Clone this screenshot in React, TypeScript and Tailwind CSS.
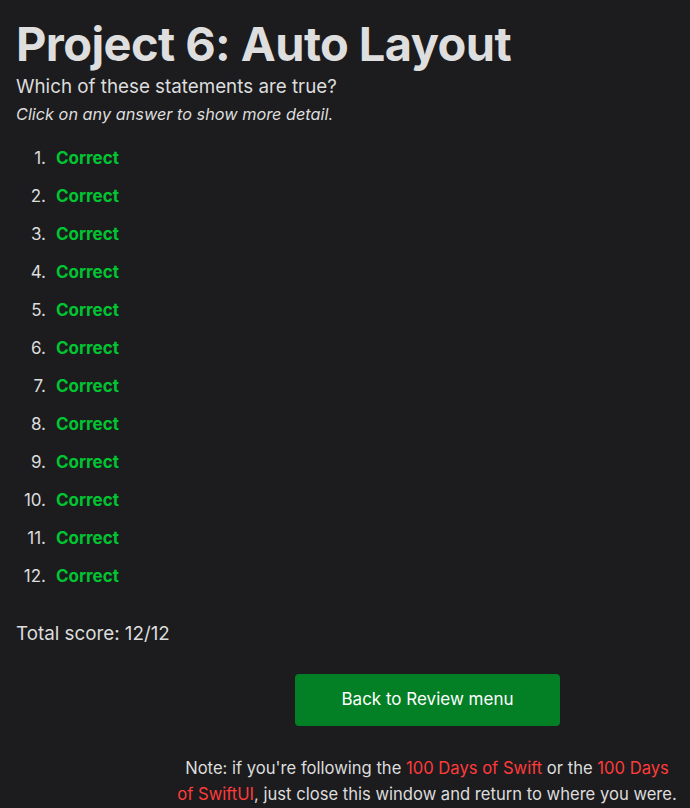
import React from "react";

export default function App() {
  const items = Array.from({ length: 12 }, (_, i) => i + 1);
  return (
    <div
      className="min-h-[808px] w-full bg-[#1c1c1e] px-4 text-[#dddddd]"
      style={{ fontFamily: "Inter, 'Noto Sans', sans-serif" }}
    >
      <h1 className="pt-[14px] text-[47px] font-bold leading-[60px] tracking-[-0.6px] text-[#dedede]">
        Project 6: Auto Layout
      </h1>
      <p className="mt-0 text-[18.8px] leading-[26px]">Which of these statements are true?</p>
      <p className="mt-[3px] text-[16.3px] italic leading-[22px]">Click on any answer to show more detail.</p>
      <ol className="mt-[22px] flex flex-col gap-[16px]">
        {items.map((n) => (
          <li key={n} className="flex h-[22px] items-center text-[17px] leading-[22px]">
            <span className="w-[30px] text-right">{n}.</span>
            <span className="ml-[10px] font-bold text-[#00c532]">Correct</span>
          </li>
        ))}
      </ol>
      <p className="mt-[35px] text-[18.8px] leading-[24px]">Total score: 12/12</p>
      <div className="mt-[28px] pl-[279px]">
        <button className="h-[52px] w-[265px] rounded-[4px] bg-[#037f25] text-[17px] text-white">
          Back to Review menu
        </button>
      </div>
      <p className="-mr-[10px] ml-[154px] mt-[29px] whitespace-nowrap text-center text-[16.6px] leading-[26px]">
        Note: if you're following the <span className="text-[#ff3b3b]">100 Days of Swift</span> or the{" "}
        <span className="text-[#ff3b3b]">100 Days</span>
        <br />
        <span className="text-[#ff3b3b]">of SwiftUI</span>, just close this window and return to where you were.
      </p>
    </div>
  );
}
